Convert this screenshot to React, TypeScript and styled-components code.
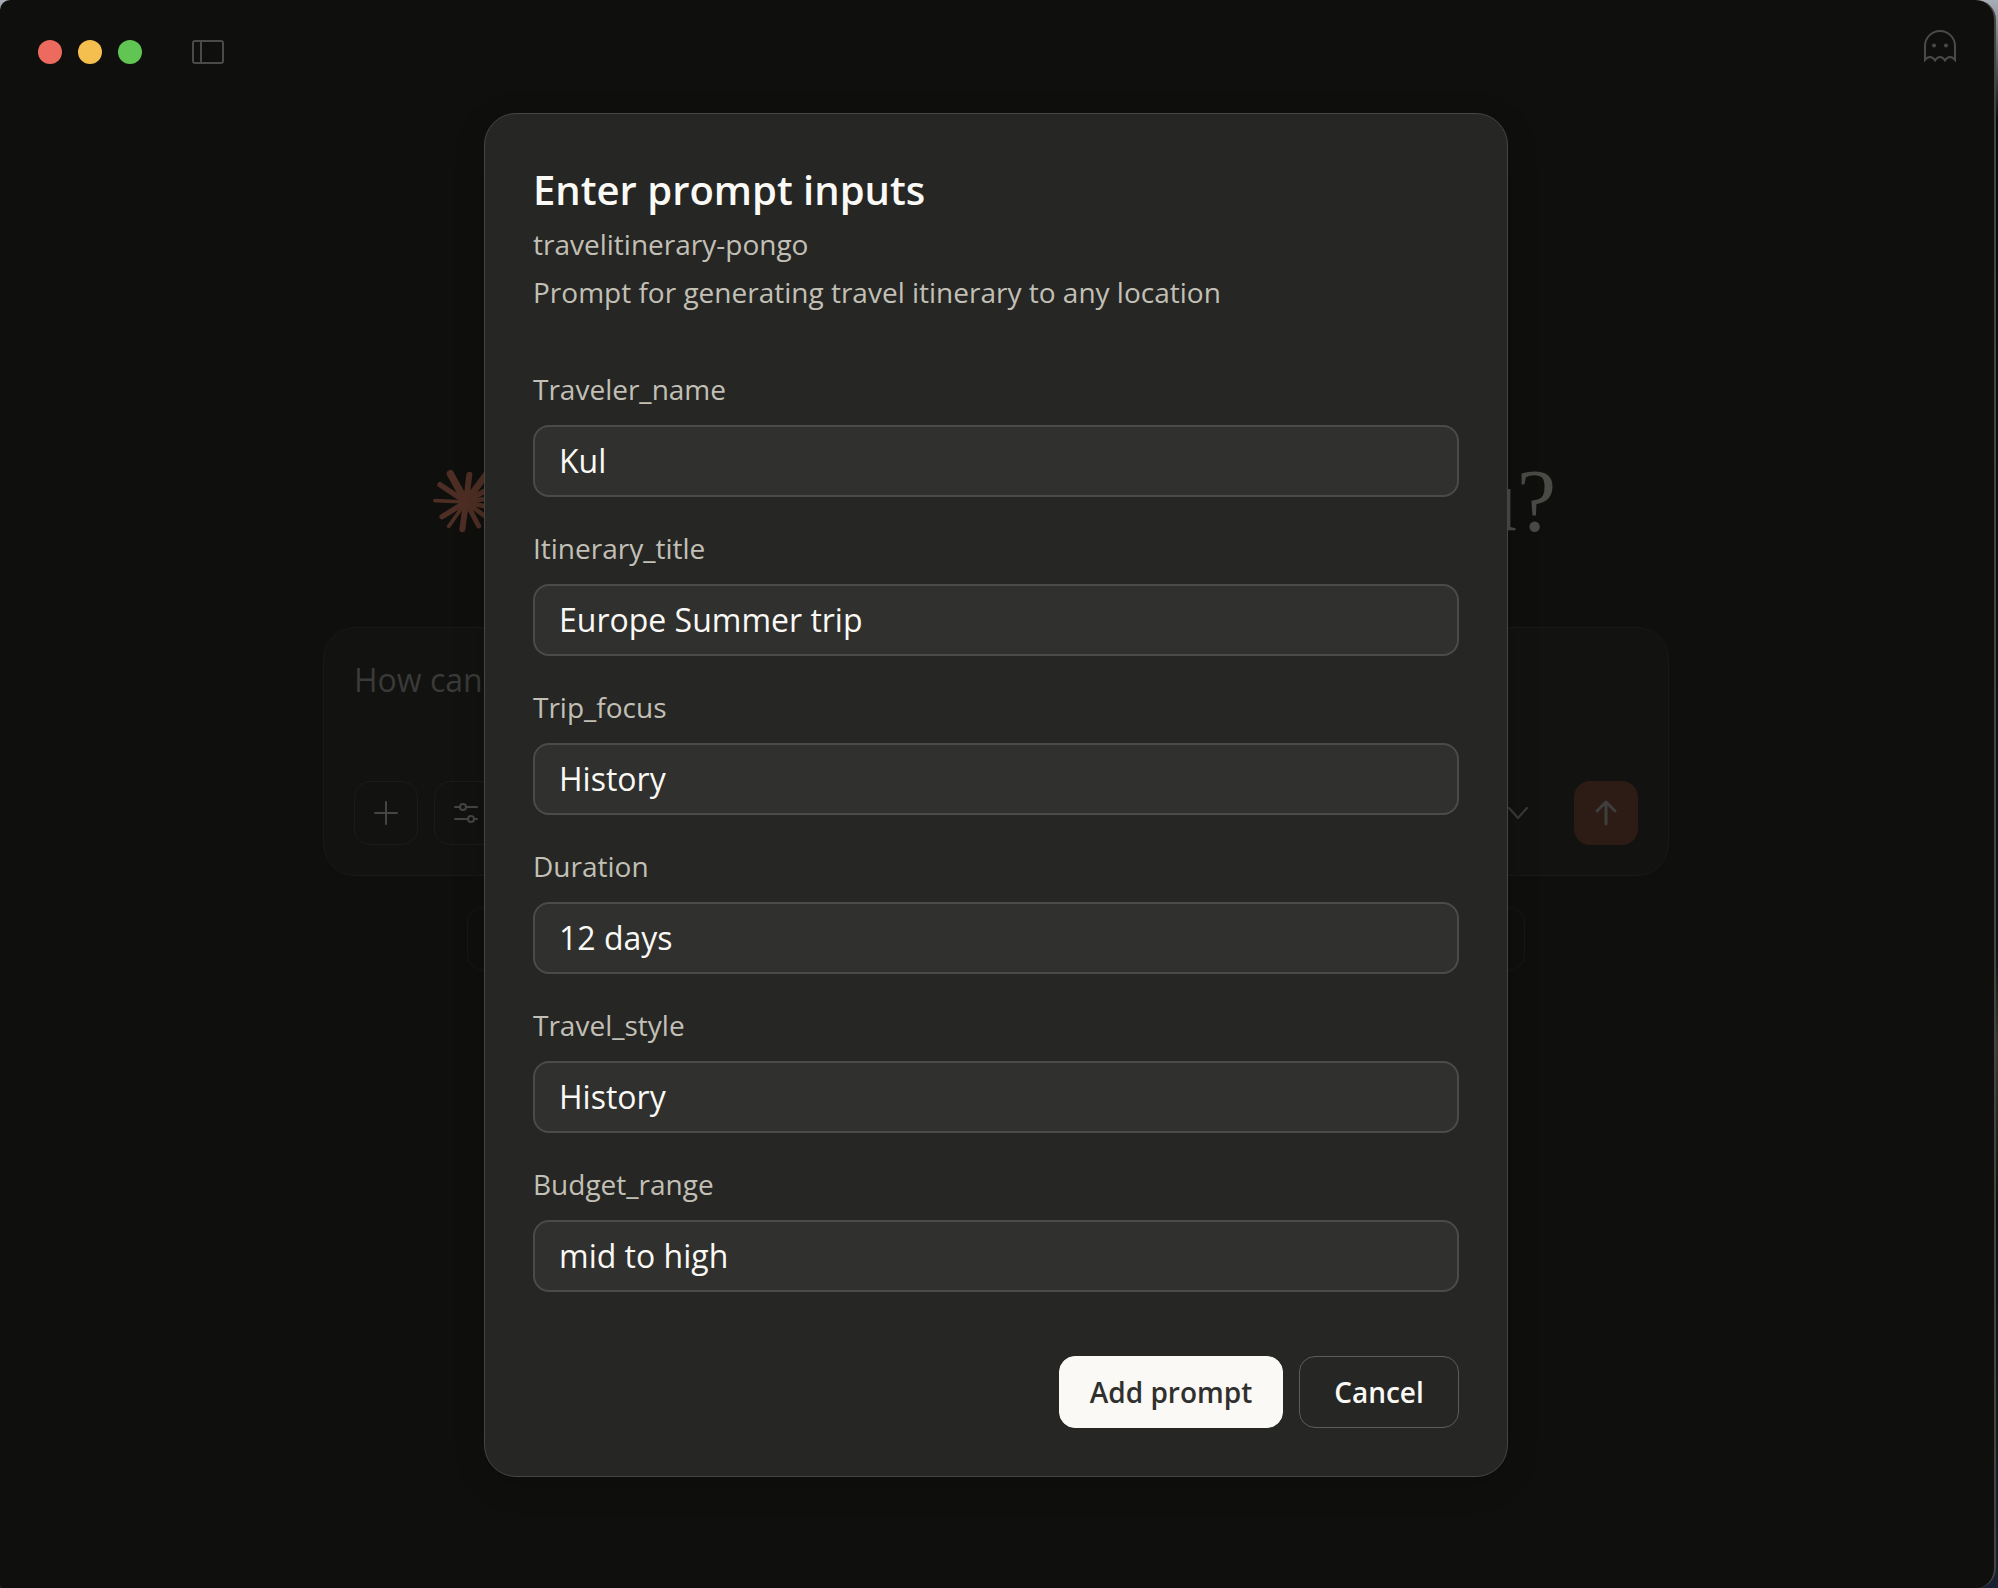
import React from "react";
import styled, { createGlobalStyle } from "styled-components";

const sans = `"Open Sans", "Noto Sans", sans-serif`;

const GlobalStyle = createGlobalStyle`
  *, *::before, *::after { box-sizing: border-box; }
  html, body, #root { height: 100%; }
  body {
    margin: 0;
    background: linear-gradient(#a9aeb6 0, #8b9097 24px, #0b0b0d 120px, #111217 60%, #3a3931 66%, #0e0e10 76%, #182234 100%);
    font-family: ${sans};
  }
  button, input { font-family: inherit; }
`;

const Window = styled.div`
  position: relative;
  display: flex;
  flex-direction: column;
  min-height: 100%;
  margin-right: 2px;
  padding-right: 2px;
  border-right: 2px solid #444442;
  border-radius: 10px 20px 20px 4px;
  background: #0f0f0d;
  overflow: hidden;
`;

const TopBar = styled.header`
  display: flex;
  justify-content: space-between;
  align-items: flex-start;
  padding: 0 36px 0 38px;
`;

const Controls = styled.div`
  display: flex;
  align-items: center;
  gap: 16px;
  height: 104px;
`;

const Light = styled.button<{ $color: string }>`
  width: 24px;
  height: 24px;
  padding: 0;
  border: 0;
  border-radius: 50%;
  background: ${(p) => p.$color};
`;

const IconButton = styled.button`
  display: flex;
  align-items: center;
  padding: 0;
  border: 0;
  background: none;
  color: #4a4a48;
`;

const SidebarButton = styled(IconButton)`
  margin-left: 34px;
`;

const GhostButton = styled(IconButton)`
  height: 92px;
`;

const Main = styled.main`
  display: flex;
  flex-direction: column;
  align-items: center;
  padding: 347px 24px 0;
`;

const Hero = styled.div`
  display: flex;
  align-items: center;
  justify-content: space-between;
  width: 100%;
  max-width: 1128px;
  margin-bottom: 76px;
  padding-right: 4px;
`;

const Greeting = styled.h1`
  margin: 0;
  font: 400 88px/100px "Liberation Serif", serif;
  color: #494946;
`;

const Composer = styled.form`
  display: flex;
  flex-direction: column;
  justify-content: space-between;
  gap: 78px;
  width: 100%;
  max-width: 1346px;
  padding: 27px 30px 30px;
  border: 1px solid #191917;
  border-radius: 32px;
  background: #121210;
`;

const ComposerInput = styled.input`
  width: 100%;
  height: 48px;
  padding: 0;
  border: 0;
  outline: 0;
  background: none;
  font-size: 32px;
  color: #3a3a38;
  &::placeholder { color: #3a3a38; opacity: 1; }
`;

const Tools = styled.div`
  display: flex;
  align-items: center;
  gap: 16px;
`;

const ToolButton = styled.button`
  display: grid;
  place-items: center;
  width: 64px;
  height: 64px;
  padding: 0;
  border: 1px solid #1b1b19;
  border-radius: 16px;
  background: none;
  color: #454543;
`;

const ModelButton = styled(IconButton)`
  margin-left: auto;
  margin-right: 29px;
  color: #3a3a38;
`;

const SendButton = styled(ToolButton)`
  border: 0;
  background: #2d1c15;
  color: #3e3e3c;
`;

const Suggestions = styled.div`
  display: flex;
  justify-content: space-between;
  width: 100%;
  max-width: 1058px;
  margin-top: 31px;
`;

const Suggestion = styled.button`
  width: 200px;
  height: 64px;
  border: 1px solid #171715;
  border-radius: 16px;
  background: none;
`;

const Overlay = styled.div`
  position: absolute;
  inset: 0;
  display: flex;
  align-items: center;
  justify-content: center;
  padding: 2px 2px 0 0;
`;

const Dialog = styled.section`
  width: 1024px;
  max-width: 100%;
  padding: 48px;
  border: 1px solid #454543;
  border-radius: 32px;
  background: #262624;
  box-shadow: 0 8px 32px rgba(0, 0, 0, 0.16);
`;

const Title = styled.h2`
  margin: 0 0 2px;
  font-size: 40px;
  font-weight: 600;
  line-height: 56px;
  color: #faf9f5;
`;

const Note = styled.p`
  margin: 0;
  font-size: 28px;
  line-height: 48px;
  color: #c2c0b6;
`;

const Fields = styled.form`
  display: flex;
  flex-direction: column;
  gap: 32px;
  margin-top: 54px;
`;

const Field = styled.div`
  display: flex;
  flex-direction: column;
  gap: 16px;
`;

const Label = styled.label`
  font-size: 28px;
  line-height: 39px;
  color: #c2c0b6;
`;

const TextInput = styled.input`
  width: 100%;
  height: 72px;
  padding: 0 24px 2px;
  border: 2px solid #4b4b49;
  border-radius: 16px;
  outline: 0;
  background: #30302e;
  font-size: 32px;
  color: #faf9f5;
`;

const Actions = styled.div`
  display: flex;
  justify-content: flex-end;
  gap: 16px;
  margin-top: 32px;
`;

const ActionButton = styled.button<{ $primary?: boolean }>`
  min-width: ${(p) => (p.$primary ? 224 : 160)}px;
  height: 72px;
  padding: 0 24px;
  border: 1px solid ${(p) => (p.$primary ? "#faf9f5" : "#5c5c5a")};
  border-radius: 16px;
  background: ${(p) => (p.$primary ? "#faf9f5" : "transparent")};
  font-size: 28px;
  font-weight: 600;
  color: ${(p) => (p.$primary ? "#30302e" : "#faf9f5")};
`;

const rays = [
  [-47, -85, 22], [10, -82, 18], [60, -82, 20], [-78, -52, 16], [-93, -4, 11],
  [-72, 44, 16], [-52, 73, 11], [-11, 82, 18], [38, 72, 15], [80, 60, 14],
  [95, 22, 14], [95, -15, 14], [85, -50, 16],
];

const Burst = () => (
  <svg width="68" height="68" viewBox="-102 -105 204 204" stroke="#4d2e24" strokeLinecap="round" aria-hidden="true">
    {rays.map(([x, y, w]) => (
      <line key={`${x},${y}`} x1="0" y1="0" x2={x} y2={y} strokeWidth={w} />
    ))}
    <circle r="19" fill="#4d2e24" stroke="none" />
  </svg>
);

const SidebarIcon = () => (
  <svg width="32" height="24" viewBox="0 0 32 24" fill="none" stroke="currentColor" strokeWidth="2">
    <rect x="1" y="1" width="30" height="22" rx="2" />
    <path d="M9 1v22" />
  </svg>
);

const GhostIcon = () => (
  <svg width="32" height="32" viewBox="0 0 32 32" fill="none" stroke="currentColor" strokeWidth="2">
    <path d="M1 30V16a15 15 0 0 1 30 0v14c-1.500-2-3.500-3-5-3s-3.500 1-5 3.500c-1.500-2.500-3.500-3.500-5-3.500s-3.500 1-5 3.500c-1.500-2.500-3.500-3.500-5-3.500s-3.500 1-5 3z" />
    <circle cx="10" cy="15.500" r="2" fill="currentColor" stroke="none" />
    <circle cx="22" cy="15.500" r="2" fill="currentColor" stroke="none" />
  </svg>
);

const PlusIcon = () => (
  <svg width="24" height="24" viewBox="0 0 24 24" stroke="currentColor" strokeWidth="2" strokeLinecap="round">
    <path d="M12 1v22M1 12h22" />
  </svg>
);

const SlidersIcon = () => (
  <svg width="24" height="24" viewBox="0 0 24 24" fill="none" stroke="currentColor" strokeWidth="2" strokeLinecap="round">
    <path d="M1 6h5M12 6h11M1 18h13M20 18h3" />
    <circle cx="9" cy="6" r="3" />
    <circle cx="17" cy="18" r="3" />
  </svg>
);

const ChevronIcon = () => (
  <svg width="22" height="14" viewBox="0 0 22 14" fill="none" stroke="currentColor" strokeWidth="2" strokeLinecap="round" strokeLinejoin="round">
    <path d="M2 2l9 10 9-10" />
  </svg>
);

const ArrowIcon = () => (
  <svg width="24" height="28" viewBox="0 0 24 28" fill="none" stroke="currentColor" strokeWidth="3" strokeLinecap="round" strokeLinejoin="round">
    <path d="M12 25V3M3 12l9-9 9 9" />
  </svg>
);

const fields = [
  { name: "Traveler_name", value: "Kul" },
  { name: "Itinerary_title", value: "Europe Summer trip" },
  { name: "Trip_focus", value: "History" },
  { name: "Duration", value: "12 days" },
  { name: "Travel_style", value: "History" },
  { name: "Budget_range", value: "mid to high" },
];

const lights = [
  { label: "Close", color: "#ed6a5e" },
  { label: "Minimize", color: "#f5bf4f" },
  { label: "Zoom", color: "#61c554" },
];

export default function App() {
  return (
    <>
      <GlobalStyle />
      <Window>
        <TopBar>
          <Controls>
            {lights.map((l) => (
              <Light key={l.label} type="button" aria-label={l.label} $color={l.color} />
            ))}
            <SidebarButton type="button" aria-label="Toggle sidebar">
              <SidebarIcon />
            </SidebarButton>
          </Controls>
          <GhostButton type="button" aria-label="Incognito chat">
            <GhostIcon />
          </GhostButton>
        </TopBar>

        <Main>
          <Hero>
            <Burst />
            <Greeting>you?</Greeting>
          </Hero>
          <Composer onSubmit={(e) => e.preventDefault()}>
            <ComposerInput aria-label="Message" placeholder="How can I help you today?" />
            <Tools>
              <ToolButton type="button" aria-label="Add content"><PlusIcon /></ToolButton>
              <ToolButton type="button" aria-label="Tools"><SlidersIcon /></ToolButton>
              <ModelButton type="button" aria-label="Choose model"><ChevronIcon /></ModelButton>
              <SendButton type="submit" aria-label="Send"><ArrowIcon /></SendButton>
            </Tools>
          </Composer>
          <Suggestions>
            <Suggestion type="button" aria-label="First suggestion" />
            <Suggestion type="button" aria-label="Last suggestion" />
          </Suggestions>
        </Main>

        <Overlay>
          <Dialog role="dialog" aria-modal="true" aria-labelledby="dialog-title">
            <Title id="dialog-title">Enter prompt inputs</Title>
            <Note>travelitinerary-pongo</Note>
            <Note>Prompt for generating travel itinerary to any location</Note>
            <Fields onSubmit={(e) => e.preventDefault()}>
              {fields.map((f) => (
                <Field key={f.name}>
                  <Label htmlFor={f.name}>{f.name}</Label>
                  <TextInput id={f.name} name={f.name} defaultValue={f.value} />
                </Field>
              ))}
              <Actions>
                <ActionButton type="submit" $primary>Add prompt</ActionButton>
                <ActionButton type="button">Cancel</ActionButton>
              </Actions>
            </Fields>
          </Dialog>
        </Overlay>
      </Window>
    </>
  );
}
